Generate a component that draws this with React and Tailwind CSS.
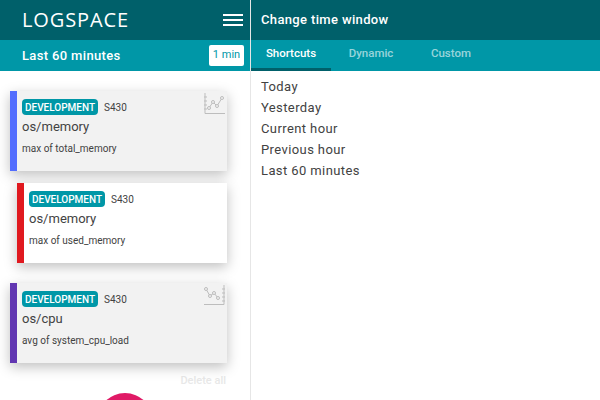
import React from 'react';

const ROBOTO = { fontFamily: 'Roboto, sans-serif' };

const CARDS = [
  { name: 'os/memory', detail: 'max of total_memory', bar: 'border-l-[#536dfe]', bg: 'bg-[#f2f2f2]', icon: 'up', box: 'mt-5 ml-2.5 w-[217px]' },
  { name: 'os/memory', detail: 'max of used_memory', bar: 'border-l-[#e0191f]', bg: 'bg-white', icon: null, box: 'mt-3 ml-[17px] w-[210px]' },
  { name: 'os/cpu', detail: 'avg of system_cpu_load', bar: 'border-l-[#6136b1]', bg: 'bg-[#f2f2f2]', icon: 'down', box: 'mt-5 ml-2.5 w-[217px]' }
];

const SHORTCUTS = ['Today', 'Yesterday', 'Current hour', 'Previous hour', 'Last 60 minutes'];

const ChartUp = () => (
  <svg width="21" height="21" viewBox="0 0 21 21" fill="none" stroke="#bdbdbd" strokeWidth="1">
    <path d="M1 0V20.5H21" />
    <path d="M0 4H3M0 8H3M0 12H3M0 16H3" />
    <path d="M5 15L9 9L13 13L18 5" />
    <circle cx="5" cy="15" r="1.5" fill="#f2f2f2" />
    <circle cx="9" cy="9" r="1.5" fill="#f2f2f2" />
    <circle cx="13" cy="13" r="1.5" fill="#f2f2f2" />
    <circle cx="18" cy="5" r="1.5" fill="#f2f2f2" />
  </svg>
);

const ChartDown = () => (
  <svg width="21" height="21" viewBox="0 0 21 21" fill="none" stroke="#bdbdbd" strokeWidth="1">
    <path d="M20 0V19.5H0" />
    <path d="M21 4H18M21 8H18M21 12H18M21 16H18" />
    <path d="M2 4L6 11L10 8L14 13" />
    <circle cx="2" cy="4" r="1.5" fill="#f2f2f2" />
    <circle cx="6" cy="11" r="1.5" fill="#f2f2f2" />
    <circle cx="10" cy="8" r="1.5" fill="#f2f2f2" />
    <circle cx="14" cy="13" r="1.5" fill="#f2f2f2" />
  </svg>
);

const MetricCard = ({ card }) => (
  <div className={`relative h-20 border-l-[7px] pl-[5px] pt-2 shadow-[0_4px_12px_rgba(0,0,0,0.25)] ${card.bar} ${card.bg} ${card.box}`}>
    {card.icon && (
      <div className="absolute right-0.5 top-0.5">
        {card.icon === 'up' ? <ChartUp /> : <ChartDown />}
      </div>
    )}
    <div className="flex items-center gap-[6px]">
      <span className="flex h-4 w-[76px] items-center justify-center rounded-sm bg-[#0097a7] text-[10px] font-medium text-white">
        DEVELOPMENT
      </span>
      <span className="text-[10px] text-[#424242]">S430</span>
    </div>
    <div className="mt-[2px] text-[13px] leading-5 text-[#424242]">{card.name}</div>
    <div className="mt-[4px] text-[10px] leading-4 text-[#424242]">{card.detail}</div>
  </div>
);

export default function App() {
  return (
    <div className="flex h-[400px] w-[600px] overflow-hidden bg-white" style={ROBOTO}>
      <div className="relative w-[251px] shrink-0 border-r border-[#e6e6e6]">
        <div className="flex h-10 items-center justify-between bg-[#00606a] pl-[22px] pr-[7px]">
          <span className="text-[20px] tracking-[0.9px] text-white" style={{ fontFamily: 'Open Sans, sans-serif' }}>LOGSPACE</span>
          <div className="flex w-5 flex-col gap-[3px]">
            <div className="h-0.5 bg-white" />
            <div className="h-0.5 bg-white" />
            <div className="h-0.5 bg-white" />
          </div>
        </div>
        <div className="flex h-[31px] items-center justify-between bg-[#0097a7] pl-[22px] pr-1.5">
          <span className="text-[13px] font-medium tracking-[0.35px] text-white">Last 60 minutes</span>
          <span className="flex h-[21px] w-[35px] items-center justify-center rounded-[2px] bg-white text-[11px] text-[#0097a7]">1 min</span>
        </div>
        {CARDS.map((card, idx) => (
          <MetricCard key={idx} card={card} />
        ))}
        <div className="mt-[10px] w-[226px] text-right text-[11px] font-medium text-[#e8e8e8]">Delete all</div>
        <div className="absolute left-[97px] top-[393px] h-14 w-14 rounded-full bg-[#e01a66]" />
      </div>
      <div className="flex-1">
        <div className="flex h-10 items-center bg-[#00606a] pl-2.5 text-[13px] font-medium tracking-[0.35px] text-white">Change time window</div>
        <div className="flex h-[31px] bg-[#0097a7] text-[11.5px] font-medium">
          <div className="flex w-20 items-center justify-center border-b-[3px] border-[#00606a] text-white">Shortcuts</div>
          <div className="flex w-20 items-center justify-center pb-[3px] text-white/60">Dynamic</div>
          <div className="flex w-20 items-center justify-center pb-[3px] text-white/60">Custom</div>
        </div>
        <div className="pl-2.5 pt-[5px]">
          {SHORTCUTS.map((item) => (
            <div key={item} className="text-[13px] leading-[21px] tracking-[0.4px] text-[#424242]">{item}</div>
          ))}
        </div>
      </div>
    </div>
  );
}
